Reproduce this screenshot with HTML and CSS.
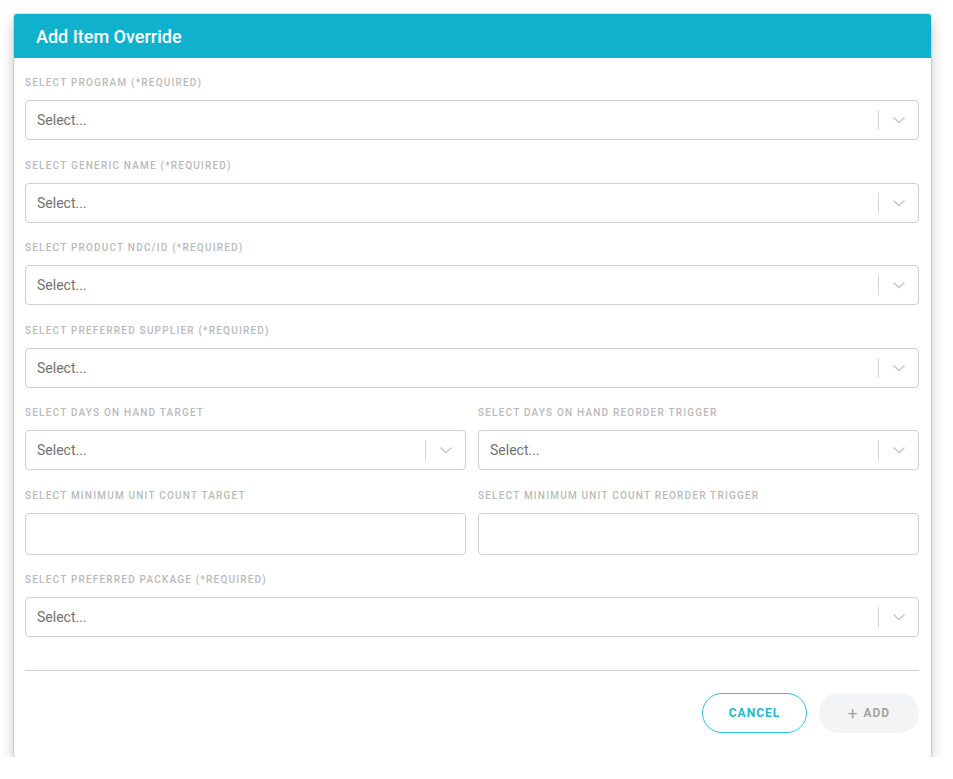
FILE: index.html
```html
<!DOCTYPE html>
<html>
<head>
<meta charset="utf-8">
<link rel="stylesheet" href="styles.css">
</head>
<body>
<div class="modal">
  <div class="modal-header">Add Item Override</div>
  <div class="modal-body">
    <div class="field">
      <div class="label">Select Program (*Required)</div>
      <div class="select"><span class="placeholder">Select...</span><span class="indicator"><svg width="14" height="8" viewBox="0 0 14 8"><polyline points="1.5,1.5 7,6.5 12.5,1.5" fill="none" stroke="#c8c8c8" stroke-width="1.6"/></svg></span></div>
    </div>
    <div class="field">
      <div class="label">Select Generic Name (*Required)</div>
      <div class="select"><span class="placeholder">Select...</span><span class="indicator"><svg width="14" height="8" viewBox="0 0 14 8"><polyline points="1.5,1.5 7,6.5 12.5,1.5" fill="none" stroke="#c8c8c8" stroke-width="1.6"/></svg></span></div>
    </div>
    <div class="field">
      <div class="label">Select Product NDC/ID (*Required)</div>
      <div class="select"><span class="placeholder">Select...</span><span class="indicator"><svg width="14" height="8" viewBox="0 0 14 8"><polyline points="1.5,1.5 7,6.5 12.5,1.5" fill="none" stroke="#c8c8c8" stroke-width="1.6"/></svg></span></div>
    </div>
    <div class="field">
      <div class="label">Select Preferred Supplier (*Required)</div>
      <div class="select"><span class="placeholder">Select...</span><span class="indicator"><svg width="14" height="8" viewBox="0 0 14 8"><polyline points="1.5,1.5 7,6.5 12.5,1.5" fill="none" stroke="#c8c8c8" stroke-width="1.6"/></svg></span></div>
    </div>
    <div class="row">
      <div class="field">
        <div class="label">Select Days On Hand Target</div>
        <div class="select"><span class="placeholder">Select...</span><span class="indicator"><svg width="14" height="8" viewBox="0 0 14 8"><polyline points="1.5,1.5 7,6.5 12.5,1.5" fill="none" stroke="#c8c8c8" stroke-width="1.6"/></svg></span></div>
      </div>
      <div class="field">
        <div class="label">Select Days On Hand Reorder Trigger</div>
        <div class="select"><span class="placeholder">Select...</span><span class="indicator"><svg width="14" height="8" viewBox="0 0 14 8"><polyline points="1.5,1.5 7,6.5 12.5,1.5" fill="none" stroke="#c8c8c8" stroke-width="1.6"/></svg></span></div>
      </div>
    </div>
    <div class="row">
      <div class="field">
        <div class="label">Select Minimum Unit Count Target</div>
        <div class="input"></div>
      </div>
      <div class="field">
        <div class="label">Select Minimum Unit Count Reorder Trigger</div>
        <div class="input"></div>
      </div>
    </div>
    <div class="field">
      <div class="label">Select Preferred Package (*Required)</div>
      <div class="select"><span class="placeholder">Select...</span><span class="indicator"><svg width="14" height="8" viewBox="0 0 14 8"><polyline points="1.5,1.5 7,6.5 12.5,1.5" fill="none" stroke="#c8c8c8" stroke-width="1.6"/></svg></span></div>
    </div>
    <div class="divider"></div>
    <div class="actions">
      <button class="btn btn-cancel">Cancel</button>
      <button class="btn btn-add"><span class="plus">+</span>Add</button>
    </div>
  </div>
</div>
</body>
</html>
```
FILE: styles.css
```css
* { box-sizing: border-box; }
html, body { margin: 0; padding: 0; background: #ffffff; }
body {
  font-family: Roboto, "Liberation Sans", sans-serif;
  padding: 14px 0 0 14px;
}
.modal {
  width: 917px;
  height: 743px;
  background: #fff;
  border-radius: 3px;
  box-shadow: 0 0 0 1px rgba(0,0,0,0.09), 0 6px 14px rgba(0,0,0,0.24);
  overflow: hidden;
}
.modal-header {
  height: 44px;
  background: #0fb1cc;
  color: #fff;
  font-size: 18px;
  font-weight: 500;
  padding-left: 22px;
  display: flex;
  align-items: center;
}
.modal-body {
  padding: 18px 12px 0 11px;
}
.field {
  margin-bottom: 18.5px;
}
.label {
  height: 13px;
  line-height: 13px;
  font-size: 10px;
  font-weight: 500;
  letter-spacing: 1.2px;
  text-transform: uppercase;
  color: #bababa;
  margin-bottom: 11px;
  white-space: nowrap;
}
.select {
  height: 40px;
  border: 1px solid #cfcfcf;
  border-radius: 4px;
  display: flex;
  align-items: center;
  justify-content: space-between;
}
.placeholder {
  padding-left: 11px;
  font-size: 14px;
  color: #727272;
}
.indicator {
  width: 40px;
  height: 20px;
  border-left: 1px solid #d6d6d6;
  display: flex;
  align-items: center;
  justify-content: center;
}
.indicator svg { display: block; }
.input {
  height: 42px;
  border: 1px solid #cfcfcf;
  border-radius: 4px;
}
.row {
  display: grid;
  grid-template-columns: 1fr 1fr;
  column-gap: 12px;
}
.divider {
  margin-top: 33px;
  height: 1px;
  background: #cfcfcf;
}
.actions {
  display: flex;
  justify-content: flex-end;
  gap: 12px;
  margin-top: 22px;
}
.btn {
  height: 40px;
  border-radius: 20px;
  font-family: Roboto, "Liberation Sans", sans-serif;
  font-size: 12px;
  font-weight: 700;
  letter-spacing: 1px;
  text-transform: uppercase;
  cursor: pointer;
}
.btn-cancel {
  width: 105px;
  background: #fff;
  border: 1.5px solid #2ec3d8;
  color: #1fb6cf;
}
.btn-add {
  width: 100px;
  background: #f3f4f6;
  border: none;
  color: #a3a3a3;
  display: flex;
  align-items: center;
  justify-content: center;
}
.plus {
  font-size: 17px;
  font-weight: 400;
  margin-right: 6px;
  letter-spacing: 0;
  line-height: 1;
}
```
